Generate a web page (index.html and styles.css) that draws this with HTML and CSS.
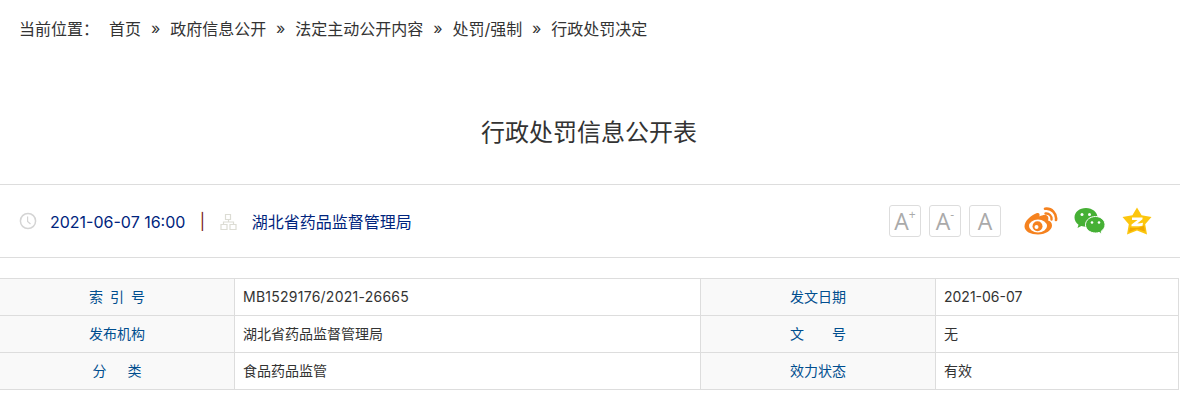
FILE: index.html
```html
<!DOCTYPE html>
<html lang="zh-CN">
<head>
    <meta charset="UTF-8">
    <title>行政处罚信息公开表</title>
    <link rel="stylesheet" href="styles.css">
</head>
<body>
    <div class="crumbs">
        <span class="crumbs-label">当前位置：</span>
        <a href="#">首页</a><span class="sep">»</span>
        <a href="#">政府信息公开</a><span class="sep">»</span>
        <a href="#">法定主动公开内容</a><span class="sep">»</span>
        <a href="#">处罚/强制</a><span class="sep">»</span>
        <a href="#">行政处罚决定</a>
    </div>

    <h1 class="title">行政处罚信息公开表</h1>

    <div class="meta">
        <div class="meta-left">
            <svg class="meta-icon clock" width="18" height="18" viewBox="0 0 18 18">
                <circle cx="9" cy="9" r="7.6" fill="none" stroke="#d4d4d4" stroke-width="1.5"/>
                <path d="M8.6 4.5V9.5L11.5 12" fill="none" stroke="#d4d4d4" stroke-width="1.2"/>
            </svg>
            <span class="meta-date">2021-06-07 16:00</span>
            <span class="meta-bar">|</span>
            <svg class="meta-icon org" width="17" height="17" viewBox="0 0 17 17">
                <path d="M5.5 1.5h5v5h-5zM1 11.5h6v5H1zM10 11.5h6v5h-6zM3.5 11.5V9h10v2.500M8.500 6.500V9" fill="none" stroke="#dcdcd4" stroke-width="1.200"/>
            </svg>
            <span class="meta-org">湖北省药品监督管理局</span>
        </div>
        <div class="meta-right">
            <div class="font-btns">
                <a class="font-btn" href="#">A<sup>+</sup></a>
                <a class="font-btn" href="#">A<sup>-</sup></a>
                <a class="font-btn" href="#">A</a>
            </div>
            <div class="share">
                <svg width="34" height="28" viewBox="0 0 34 28">
                    <path d="M13 6C7 8 .5 14 .5 19.500.5 24.500 7 27.500 14 27.500 22 27.500 28 23 28 18.500 28 15.500 26 14 24 13.500 25 10.500 24 8 21 8 19 8 17 8.500 15.500 9.500 16 6.500 15 5.500 13 6Z" fill="#f5821f"/>
                    <ellipse cx="14" cy="19" rx="9" ry="6.500" fill="#fff"/>
                    <circle cx="13.500" cy="19.200" r="5" fill="#f5821f"/>
                    <circle cx="12.500" cy="20" r="2" fill="#fff"/>
                    <path d="M21 1.800C27.500 .8 33 6.500 32 13" fill="none" stroke="#f5821f" stroke-width="2.600" stroke-linecap="round"/>
                    <path d="M21.500 6.500C25 6 28 9 27.500 12.500" fill="none" stroke="#f5821f" stroke-width="2.400" stroke-linecap="round"/>
                </svg>
                <svg width="32" height="28" viewBox="0 0 32 28">
                    <path d="M12 1C5.500 1 .5 5 .5 10.500c0 3 1.500 5.300 4 7.200L3.500 21l3.800-2c1.500.4 3.200.7 4.700.7 6.500 0 11.500-4 11.500-9.200S18.500 1 12 1Z" fill="#46b035"/>
                    <path d="M21.500 9.500c-5.500 0-10 3.700-10 8.300s4.500 8.200 10 8.200c1.200 0 2.500-.2 3.500-.6l3 1.600-.8-2.800c2.300-1.500 3.800-3.800 3.800-6.400 0-4.600-4-8.300-9.500-8.300Z" fill="#46b035" stroke="#fff" stroke-width="1"/>
                    <circle cx="8" cy="7.500" r="1.500" fill="#fff"/>
                    <circle cx="15.500" cy="7.500" r="1.500" fill="#fff"/>
                    <circle cx="18" cy="15.500" r="1.300" fill="#fff"/>
                    <circle cx="25" cy="15.500" r="1.300" fill="#fff"/>
                </svg>
                <svg width="30" height="28" viewBox="0 0 30 28">
                    <path d="M15 .5l4.600 7.700L29.500 10l-6.300 7.200 1.800 10.300-10-4-10 4 1.800-10.300L.5 10l9.900-1.800Z" fill="#fcc60e"/>
                    <path d="M8 20.500c4 1 9 1 14-2l1 6-8-2.500-8 3Z" fill="#f2a900"/>
                    <path d="M10 10.500h10.500v1.800l-5.300 4.200c2 0 4-.3 5.800-.8l-.5 3c-3.500.6-7 .8-11 .5v-1.800l6-4.400H10Z" fill="#fff"/>
                </svg>
            </div>
        </div>
    </div>

    <table class="info">
        <tr>
            <th>索&ensp;引&ensp;号</th>
            <td class="col-a doc-no">MB1529176/2021-26665</td>
            <th>发文日期</th>
            <td>2021-06-07</td>
        </tr>
        <tr>
            <th>发布机构</th>
            <td class="col-a">湖北省药品监督管理局</td>
            <th>文　　号</th>
            <td>无</td>
        </tr>
        <tr>
            <th>分　&ensp;类</th>
            <td class="col-a">食品药品监管</td>
            <th>效力状态</th>
            <td>有效</td>
        </tr>
    </table>
</body>
</html>
```

FILE: styles.css
```css
body {
    margin: 0;
    background-color: #fff;
    color: #333;
    font-family: "Inter", "Noto Sans CJK SC", sans-serif;
    overflow: hidden;
}
a {
    color: inherit;
    text-decoration: none;
}
.crumbs {
    display: flex;
    align-items: center;
    height: 56px;
    padding-left: 19px;
    font-size: 16px;
}
.crumbs-label {
    margin-right: 10px;
}
.sep {
    margin: 0 9.9px;
}
.title {
    margin: 0;
    padding: 61px 2px 0 0;
    height: 67px;
    font-size: 24px;
    font-weight: normal;
    line-height: 32px;
    text-align: center;
}
.meta {
    display: flex;
    justify-content: space-between;
    align-items: center;
    height: 72px;
    border-top: 1px solid #ddd;
    border-bottom: 1px solid #ddd;
    padding: 0 28px 0 19px;
}
.meta-left {
    display: flex;
    align-items: center;
    color: #00247d;
    font-size: 16px;
}
.meta-icon {
    flex: none;
}
.meta-date {
    margin-left: 13px;
    padding-top: 1px;
}
.meta-bar {
    margin: 0 14.600px 0 14.400px;
    color: #7a1c14;
}
.meta-org {
    margin-left: 15px;
}
.meta-right {
    display: flex;
    align-items: center;
}
.font-btns {
    display: flex;
    gap: 8px;
}
.font-btn {
    display: flex;
    justify-content: center;
    align-items: center;
    box-sizing: border-box;
    width: 32px;
    height: 32px;
    border: 1px solid #ddd;
    border-radius: 3px;
    color: #aaa;
    font-family: "Open Sans", sans-serif;
    font-size: 23px;
}
.font-btn sup {
    margin-top: -12px;
    font-size: 12px;
    line-height: 1;
}
.share {
    display: flex;
    align-items: center;
    gap: 16px;
    margin-left: 23px;
}
.info {
    width: 1180px;
    margin: 20px 0 0 -1px;
    border-collapse: collapse;
    table-layout: fixed;
    font-size: 14px;
}
.info th,
.info td {
    height: 34px;
    padding: 0 0 2px;
    border: 1px solid #ddd;
}
.info th {
    width: 234px;
    background-color: #f9f9f9;
    color: #004e8f;
    font-weight: normal;
    text-align: center;
}
.info td {
    padding-left: 8px;
}
.info .col-a {
    width: 457px;
}
.info .doc-no {
    letter-spacing: 0.25px;
}
```
